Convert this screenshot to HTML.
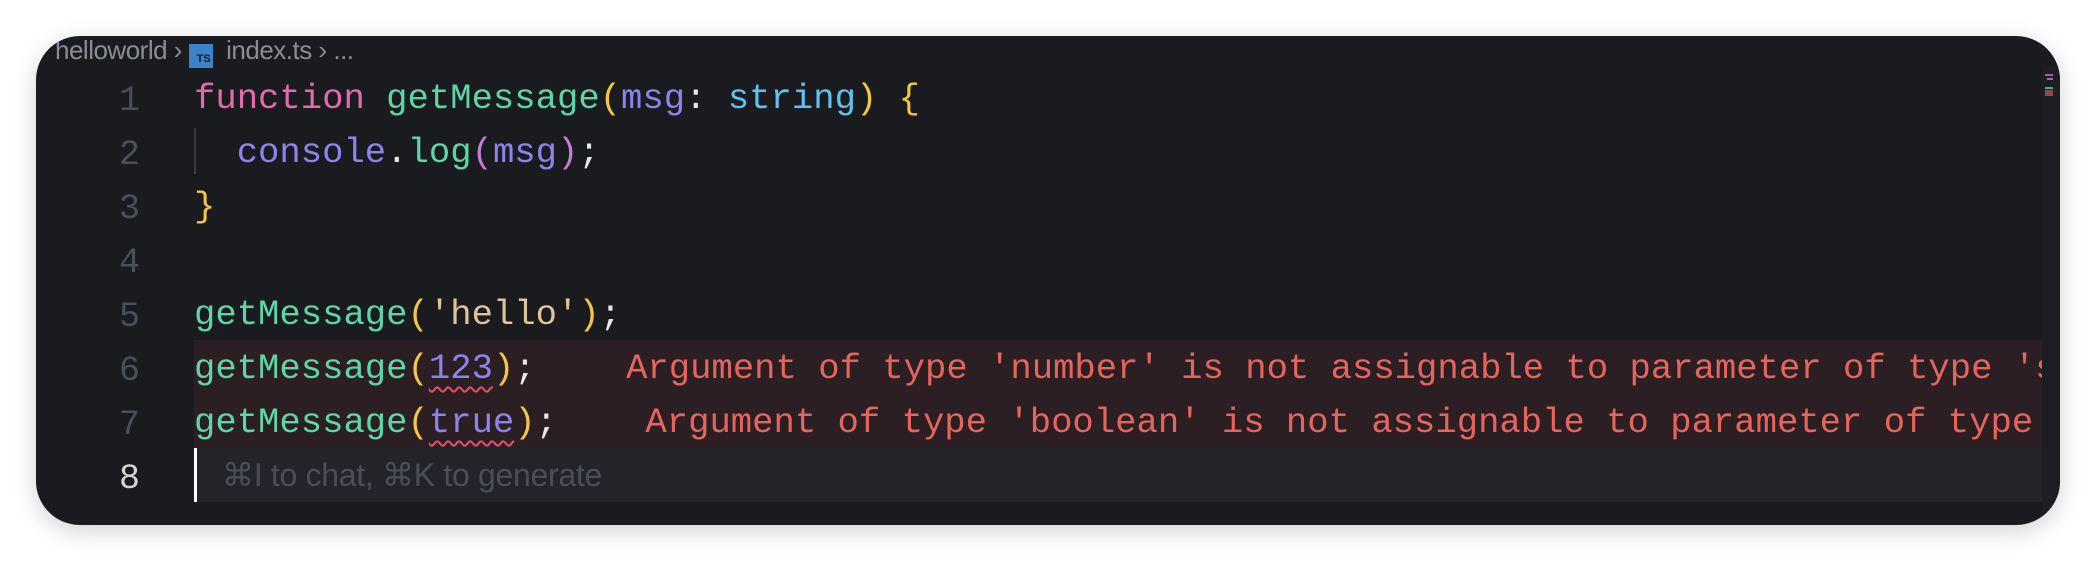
<!DOCTYPE html>
<html><head><meta charset="utf-8"><style>
html,body{margin:0;padding:0;background:#fff;width:2096px;height:562px;overflow:hidden}
.win{position:absolute;left:36px;top:36px;width:2024px;height:489px;background:#1a1b1f;border-radius:44px;overflow:hidden;box-shadow:0 6px 24px rgba(0,0,0,.18)}
.bc{position:absolute;left:19px;top:0;height:30px;font:26px "Liberation Sans",sans-serif;color:#8a8d96;white-space:pre;line-height:28px;letter-spacing:-0.5px}
.ts{display:inline-block;width:24px;height:24px;background:#3b82c9;color:#0d1b2a;font:bold 11px "Liberation Sans",sans-serif;text-align:right;vertical-align:-3px;line-height:30px;box-sizing:border-box;padding-right:2px;letter-spacing:0}
.ln{position:absolute;left:0;width:104px;text-align:right;font:35px "Liberation Mono",monospace;color:#4a4f5c;height:54px;line-height:54px;overflow:hidden}
.code{position:absolute;left:158px;width:1848px;height:54px;line-height:54px;font:35.6px "Liberation Mono",monospace;white-space:pre;color:#e8e8e8;overflow:hidden}
.in{position:relative;top:8px}
.k{color:#e46aae}.f{color:#5cd6a5}.y{color:#f3c743}.p{color:#8c83ef}.t{color:#5fc3ee}.s{color:#dfc49a}.m{color:#c67bd6}
.e{color:#e5645c}
.sq{text-decoration:underline wavy #e2506a;text-decoration-thickness:2px;text-underline-offset:8px}
.err{background:#2b1f24}
.cur{background:#232429}
</style></head><body>
<div class="win">
 <div class="bc">helloworld <span style="color:#8a8d96">›</span> <span class="ts">TS</span>  index.ts › ...</div>
 <div class="ln" style="top:34px"><span class="in" style="top:4px">1</span></div>
 <div class="ln" style="top:88px"><span class="in" style="top:4px">2</span></div>
 <div class="ln" style="top:142px"><span class="in" style="top:4px">3</span></div>
 <div class="ln" style="top:196px"><span class="in" style="top:4px">4</span></div>
 <div class="ln" style="top:250px"><span class="in" style="top:4px">5</span></div>
 <div class="ln" style="top:304px"><span class="in" style="top:4px">6</span></div>
 <div class="ln" style="top:358px"><span class="in" style="top:4px">7</span></div>
 <div class="ln" style="top:412px;color:#d4d4d4"><span class="in" style="top:4px">8</span></div>
 <div class="code" style="top:34px"><span class="in"><span class="k">function</span> <span class="f">getMessage</span><span class="y">(</span><span class="p">msg</span>: <span class="t">string</span><span class="y">)</span> <span class="y">{</span></span></div>
 <div class="code" style="top:88px"><span style="position:absolute;left:0;top:4px;width:2px;height:46px;background:#3a3c44"></span><span class="in">  <span class="p">console</span>.<span class="f">log</span><span class="m">(</span><span class="p">msg</span><span class="m">)</span>;</span></div>
 <div class="code" style="top:142px"><span class="in"><span class="y">}</span></span></div>
 <div class="code" style="top:250px"><span class="in"><span class="f">getMessage</span><span class="y">(</span><span class="s">'hello'</span><span class="y">)</span>;</span></div>
 <div class="code err" style="top:304px"><span class="in"><span class="f">getMessage</span><span class="y">(</span><span class="p sq">123</span><span class="y">)</span>;    <span class="e" style="margin-left:5px">Argument of type 'number' is not assignable to parameter of type 'string'.</span></span></div>
 <div class="code err" style="top:358px"><span class="in"><span class="f">getMessage</span><span class="y">(</span><span class="p sq">true</span><span class="y">)</span>;    <span class="e" style="margin-left:3px">Argument of type 'boolean' is not assignable to parameter of type 'string'.</span></span></div>
 <div class="code cur" style="top:412px;border-left:3px solid #fff;box-sizing:border-box"><span class="in" style="top:8px;font:32px 'Liberation Sans',sans-serif;color:#4c4e56;margin-left:25px;letter-spacing:-0.3px">⌘I to chat, ⌘K to generate</span></div>
 <div style="position:absolute;left:2006px;top:30px;width:18px;height:459px;background:#1d1e22"></div>
 <div style="position:absolute;left:2009px;top:38px;width:8px;height:2px;background:#b05a9a"></div>
 <div style="position:absolute;left:2011px;top:42px;width:6px;height:2px;background:#7a74d0"></div>
 <div style="position:absolute;left:2009px;top:51px;width:8px;height:2px;background:#4cae88"></div>
 <div style="position:absolute;left:2009px;top:54px;width:8px;height:6px;background:#8a4a50"></div>
</div>
</body></html>
